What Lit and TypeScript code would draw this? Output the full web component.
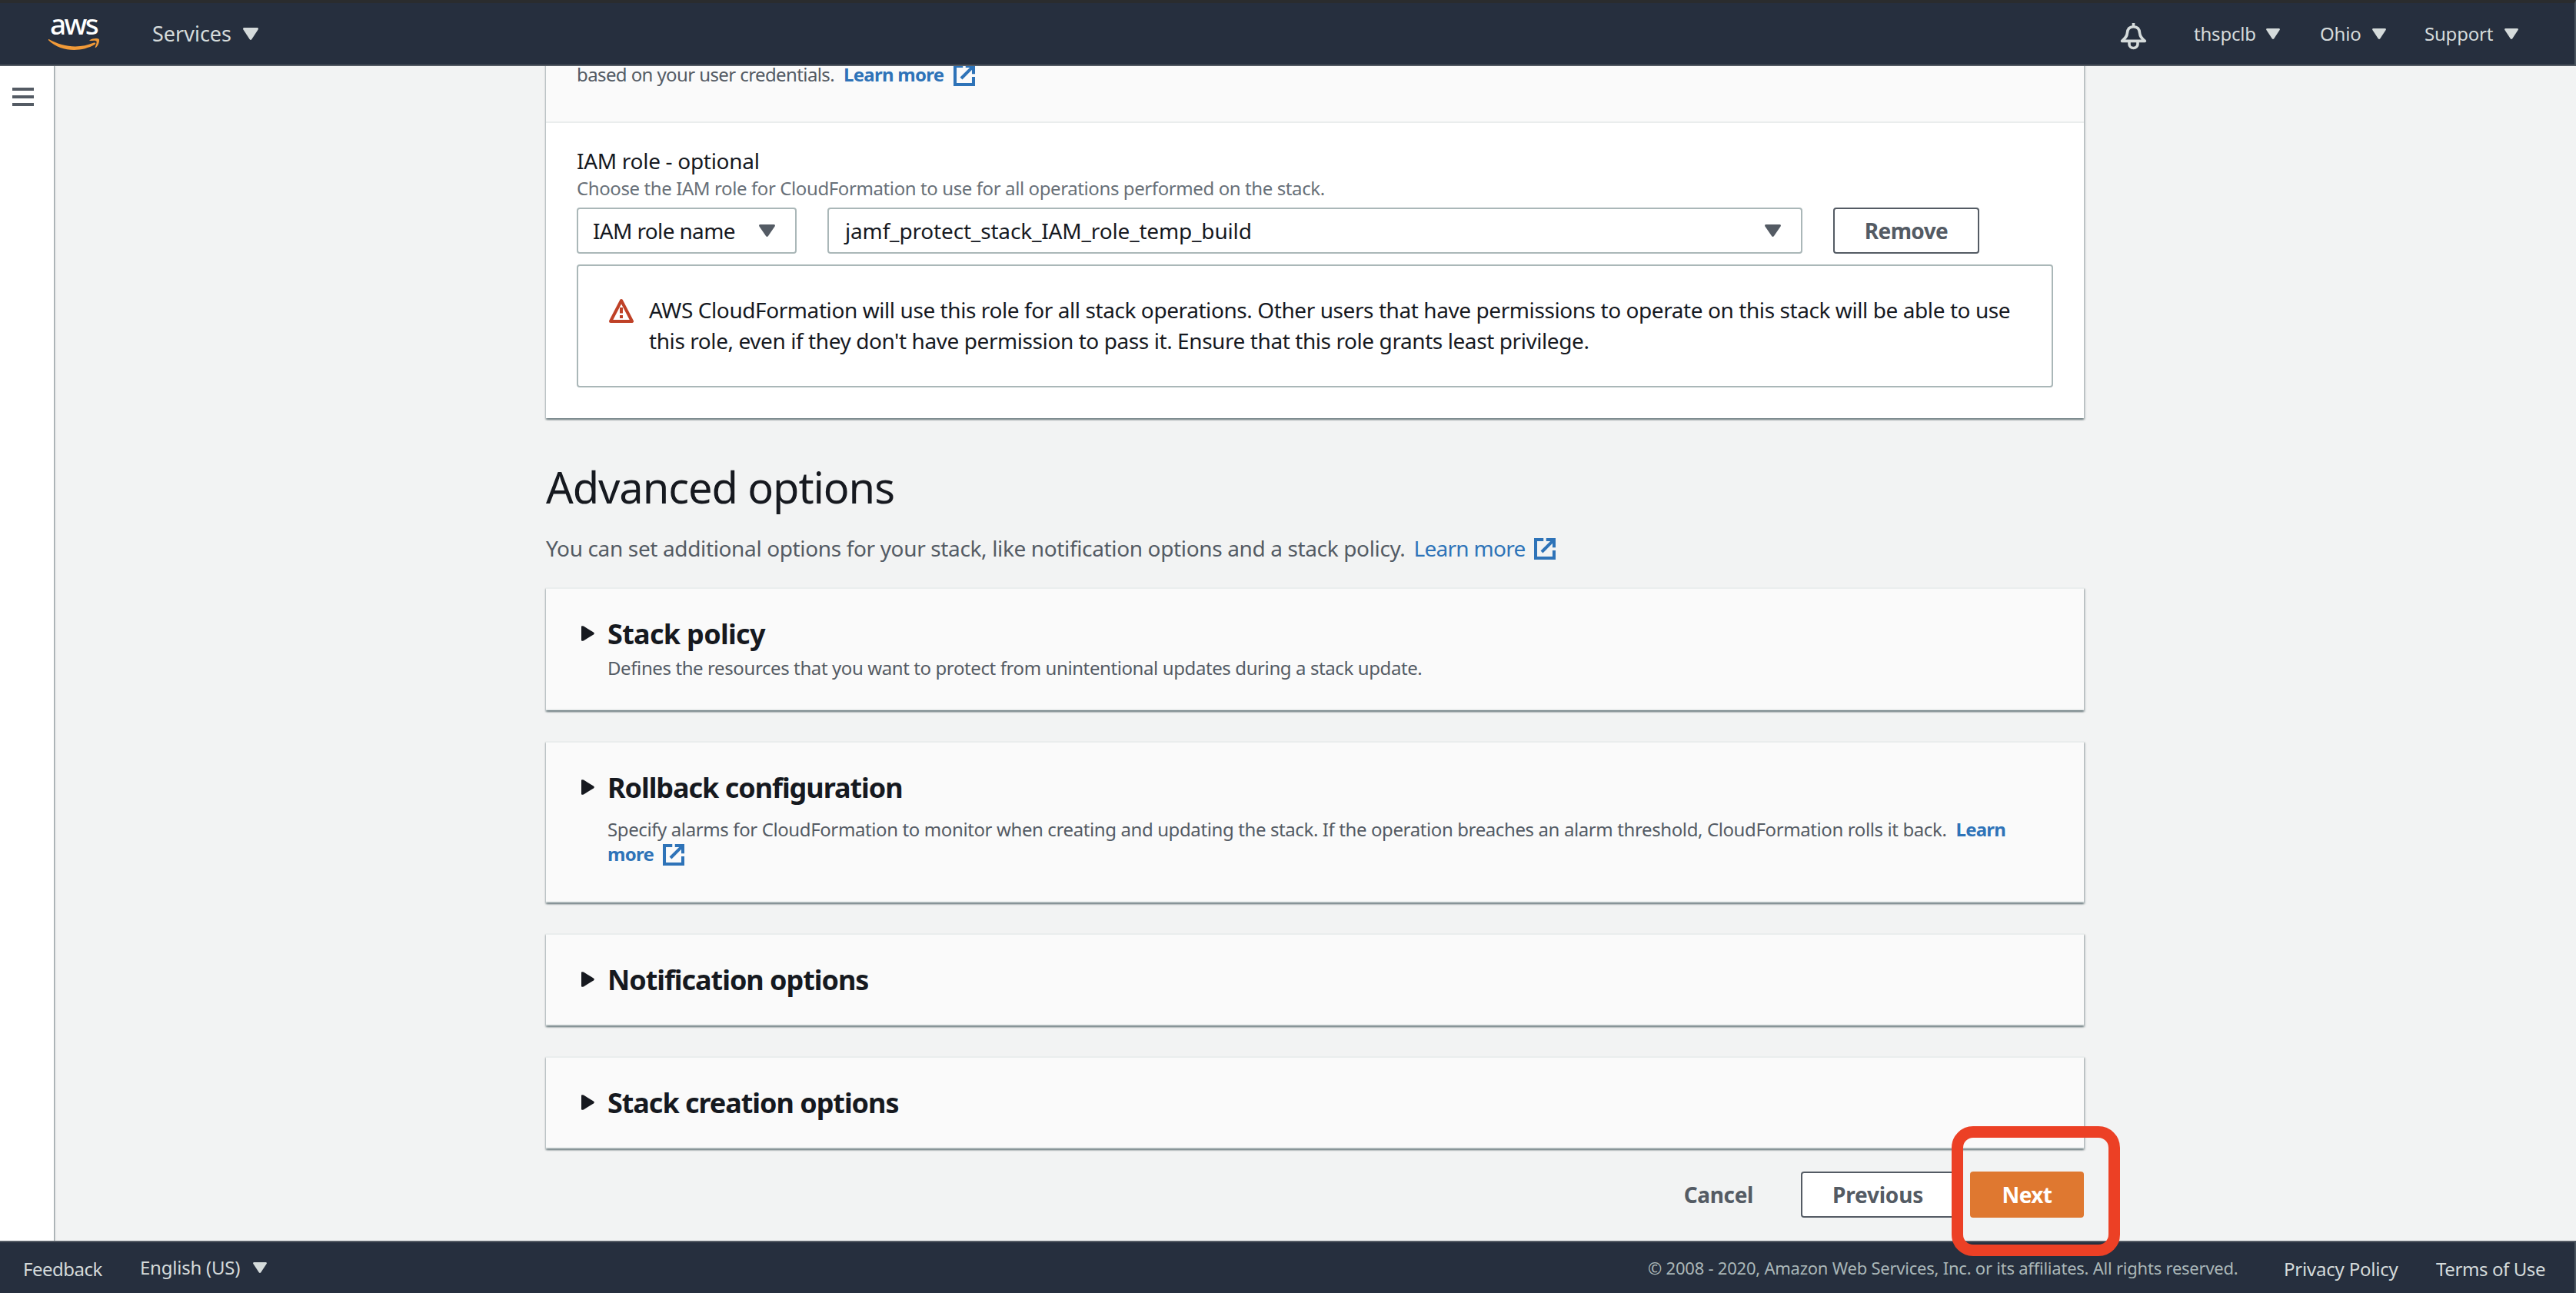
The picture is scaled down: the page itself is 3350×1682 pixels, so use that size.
import { LitElement, html, svg, css, nothing } from "lit";

const caret = (cls: string) => html`
  <svg class="caret ${cls}" viewBox="0 0 20 16" preserveAspectRatio="none">
    <path d="M1.2 0H18.8Q20.6 .6 19.6 2.4L11.4 15Q10 16.8 8.6 15L.4 2.4Q-.6 .6 1.2 0Z" />
  </svg>
`;

const external = (cls = "") => html`<svg class="external ${cls}" viewBox="0 0 16 16">
  <path d="M7 1.15H1.15V14.85H14.85V9.2" />
  <path d="M9 1.15H14.85V7" />
  <path d="M14.2 1.8L5.7 10.3" />
</svg>`;

interface Section {
  title: string;
  cls: string;
  body?: unknown;
}

const sections: Section[] = [
  {
    title: "Stack policy",
    cls: "policy",
    body: html`Defines the resources that you want to protect from unintentional updates during a stack update.`,
  },
  {
    title: "Rollback configuration",
    cls: "rollback",
    body: html`Specify alarms for CloudFormation to monitor when creating and updating the stack. If the operation
      breaches an alarm threshold, CloudFormation rolls it back.<a class="link strong lead">Learn<br />more</a>${external("low")}`,
  },
  { title: "Notification options", cls: "plain" },
  { title: "Stack creation options", cls: "plain" },
];

class AppRoot extends LitElement {
  static styles = css`
    :host {
      display: flex;
      flex-direction: column;
      box-sizing: border-box;
      width: 3350px;
      height: 1682px;
      overflow: hidden;
      background: #f2f3f3;
      color: #16191f;
      font-family: "Noto Sans", "Open Sans", sans-serif;
      font-size: 28px;
      font-weight: 400;
      line-height: 40px;
      letter-spacing: -0.42px;
    }
    * {
      box-sizing: border-box;
    }
    svg {
      display: block;
      flex: none;
    }
    .caret {
      fill: #d5dbdb;
      width: 18px;
      height: 14px;
    }
    .caret.big {
      width: 20px;
      height: 16px;
    }
    .caret.field {
      width: 21px;
      height: 16px;
      fill: #545b64;
    }
    .external {
      display: inline-block;
      width: 28px;
      height: 28px;
      fill: none;
      stroke: #2e73b8;
      stroke-width: 2.3;
      vertical-align: -6px;
      margin-left: 14px;
    }
    .external.near {
      margin-left: 11px;
      vertical-align: -4px;
    }
    .external.low {
      margin-left: 12px;
    }

    header {
      position: relative;
      z-index: 1;
      flex: none;
      display: flex;
      align-items: center;
      height: 86px;
      padding: 0 73px 0 60px;
      background: #262f3e;
      border-top: 4px solid #2a2c2e;
      border-right: 2px solid #4b555f;
      border-bottom: 2px solid #545b64;
      color: #d5dbdb;
      font-size: 24px;
      letter-spacing: -0.2px;
    }
    .logo {
      width: 72px;
      height: 68px;
      margin-top: -6px;
      overflow: visible;
    }
    .logo text {
      font-family: "Noto Sans", sans-serif;
      font-size: 37px;
      font-weight: 500;
      letter-spacing: -2.6px;
      fill: #fff;
    }
    .logo path {
      fill: #f19a38;
    }
    .menu {
      display: flex;
      align-items: center;
      justify-content: space-between;
      white-space: nowrap;
    }
    .services {
      width: 138px;
      margin-left: 66px;
      font-size: 27px;
      letter-spacing: 0;
    }
    .bell {
      width: 35px;
      height: 35px;
      margin-left: auto;
      margin-top: 7px;
      fill: none;
      stroke: #d5dbdb;
      stroke-width: 3.6;
      stroke-linejoin: round;
    }
    .account {
      width: 112px;
      margin-left: 61px;
    }
    .region {
      width: 86px;
      margin-left: 52px;
    }
    .support {
      width: 122px;
      margin-left: 50px;
    }

    .main {
      flex: 1;
      min-height: 0;
      display: flex;
    }
    .rail {
      flex: none;
      width: 70px;
      padding: 28px 16px;
      background: #fff;
      box-shadow: 1px 0 1px rgba(0, 28, 36, 0.3), 2px 0 2px rgba(0, 28, 36, 0.12);
    }
    .bars {
      display: flex;
      flex-direction: column;
      gap: 6px;
      width: 28px;
    }
    .bars i {
      height: 4px;
      background: #545b64;
    }
    .page {
      flex: none;
      width: 2000px;
      margin: 0 auto;
      white-space: nowrap;
    }

    .card {
      background: #fafafa;
      box-shadow: 0 2px 2px rgba(0, 28, 36, 0.38), 2px 2px 2px rgba(0, 28, 36, 0.16),
        -1px 2px 2px rgba(0, 28, 36, 0.16);
    }
    .permissions {
      height: 464px;
      margin-top: -6px;
      background: #fff;
    }
    .intro {
      height: 80px;
      padding: 1px 40px 0;
      background: #fafafa;
      border-bottom: 2px solid #eaeded;
      color: #545b64;
      font-size: 24px;
      line-height: 32px;
      letter-spacing: -0.6px;
    }
    .link {
      color: #2e73b8;
    }
    .strong {
      font-weight: 700;
      letter-spacing: -0.75px;
    }
    .lead {
      margin-left: 12px;
    }
    .intro .external {
      margin-left: 13px;
    }
    .fields {
      padding: 31px 40px 0;
    }
    .label {
      line-height: 36px;
      letter-spacing: -0.3px;
    }
    .hint {
      margin: 2px 0 9px;
      color: #687078;
      font-size: 24px;
      line-height: 32px;
      letter-spacing: -0.4px;
    }
    .row {
      display: flex;
    }
    .select {
      display: flex;
      align-items: center;
      justify-content: space-between;
      height: 60px;
      border: 2px solid #aab7b8;
      border-radius: 4px;
      padding: 0 26px 0 21px;
      background: #fff;
    }
    .kind {
      width: 286px;
      padding-left: 19px;
      letter-spacing: -0.65px;
    }
    .role {
      width: 1268px;
      margin: 0 40px;
      letter-spacing: -0.16px;
    }
    .button {
      display: flex;
      align-items: center;
      justify-content: center;
      height: 60px;
      border: 2px solid #545b64;
      border-radius: 4px;
      background: #fff;
      color: #545b64;
      font-weight: 700;
      letter-spacing: -0.2px;
    }
    .remove {
      width: 190px;
      letter-spacing: -0.6px;
    }
    .alert {
      display: flex;
      height: 160px;
      margin-top: 14px;
      padding: 37px 39px 0 40px;
      border: 2px solid #aab7b8;
      border-radius: 4px;
    }
    .warning {
      width: 32px;
      height: 32px;
      margin: 5px 20px 0 0;
      fill: none;
      stroke: #bf4127;
      stroke-width: 4;
      stroke-linejoin: round;
    }

    h1 {
      margin: 55px 0 26px;
      font-size: 56px;
      font-weight: 400;
      line-height: 68px;
      letter-spacing: -1.1px;
    }
    .summary {
      margin-bottom: 31px;
      color: #545b64;
      letter-spacing: -0.36px;
    }
    .summary .link {
      margin-left: 11px;
      letter-spacing: -0.7px;
    }

    .section {
      display: flex;
      height: 120px;
      margin-bottom: 40px;
      padding: 37px 44px;
      border-top: 2px solid #eaeded;
      border-bottom: 2px solid #eaeded;
    }
    .section.policy {
      height: 160px;
    }
    .section.rollback {
      height: 210px;
    }
    .arrow {
      width: 17px;
      height: 20px;
      margin: 11px 17px 0 2px;
      fill: #16191f;
    }
    h2 {
      margin: 0;
      font-size: 36px;
      font-weight: 700;
      line-height: 44px;
      letter-spacing: -1.05px;
    }
    .policy h2 {
      letter-spacing: -0.7px;
    }
    .desc {
      margin-top: 6px;
      color: #545b64;
      font-size: 24px;
      line-height: 32px;
      letter-spacing: -0.4px;
    }
    .rollback .desc {
      margin-top: 16px;
      letter-spacing: -0.39px;
    }

    .actions {
      display: flex;
      justify-content: flex-end;
      margin-top: -10px;
    }
    .cancel {
      border: 0;
      background: none;
      margin-right: 62px;
      letter-spacing: -0.35px;
    }
    .previous {
      width: 200px;
      margin-right: 20px;
    }
    .target {
      position: relative;
    }
    .next {
      width: 148px;
      border: 0;
      background: #df7830;
      color: #fff;
      letter-spacing: -0.6px;
    }
    .frame {
      position: absolute;
      left: -24px;
      top: -59px;
      width: 219px;
      height: 169px;
      border: 15px solid #ec4025;
      border-radius: 28px;
    }

    footer {
      flex: none;
      display: flex;
      height: 68px;
      padding: 0 38px 0 30px;
      background: #262f3e;
      border-top: 2px solid #545b64;
      border-right: 2px solid #4b555f;
      color: #d5dbdb;
      font-size: 24px;
      line-height: 64px;
      white-space: nowrap;
      letter-spacing: -0.23px;
    }
    .feedback {
      width: 152px;
      padding-top: 3px;
      letter-spacing: -0.5px;
    }
    .language {
      width: 165px;
    }
    .copyright {
      width: 827px;
      margin-left: auto;
      padding-top: 1px;
      color: #aab7b8;
      font-size: 22px;
    }
    .privacy {
      width: 198px;
      padding-top: 3px;
      letter-spacing: -0.2px;
    }
    .terms {
      width: 142px;
      padding-top: 3px;
      letter-spacing: -0.4px;
    }
  `;

  private header() {
    return html`
      <header>
        <svg class="logo" viewBox="60 6 72 68">
          ${svg`<text x="65" y="44">aws</text>`}
          <path
            d="M63.6 50C82 60.5 103 62.5 122.3 54.6C124 54 125 55.5 123.5 56.7C105 67.5 79 66.5 63.2 51.4C62.6 50.4 62.9 49.8 63.6 50Z"
          />
          <path
            d="M116.6 51.2C120 48.6 127.2 48.2 128.7 50C130 52.2 127.6 58.8 124.6 61C123.8 61.3 123.5 60.6 123.9 59.8C125 57.2 126.3 53.6 125.3 52.4C124 51.2 120.2 51.8 117.2 52.1C116.3 52.1 116.2 51.6 116.6 51.2Z"
          />
        </svg>
        <div class="menu services"><span>Services</span>${caret("big")}</div>
        <svg class="bell" viewBox="0 0 35 35">
          <path d="M17.5 0V5" />
          <path d="M2.6 23.4C7 19.5 9 17.5 9.3 13.5C9.6 8 12.5 4.8 17.5 4.8C22.5 4.8 25.4 8 25.7 13.5C26 17.5 28 19.5 32.4 23.4Z" />
          <path d="M12 24.5V27.5A5.5 5 0 0 0 23 27.5V24.5" />
        </svg>
        <div class="menu account"><span>thspclb</span>${caret("")}</div>
        <div class="menu region"><span>Ohio</span>${caret("")}</div>
        <div class="menu support"><span>Support</span>${caret("")}</div>
      </header>
    `;
  }

  private permissions() {
    return html`
      <section class="card permissions">
        <div class="intro">
          based on your user credentials.<a class="link strong lead">Learn more</a>${external()}
        </div>
        <div class="fields">
          <div class="label">IAM role - optional</div>
          <div class="hint">
            Choose the IAM role for CloudFormation to use for all operations performed on the stack.
          </div>
          <div class="row">
            <div class="select kind"><span>IAM role name</span>${caret("field")}</div>
            <div class="select role"><span>jamf_protect_stack_IAM_role_temp_build</span>${caret("field")}</div>
            <div class="button remove">Remove</div>
          </div>
          <div class="alert">
            <svg class="warning" viewBox="0 0 32 32">
              <path d="M16 3L30 30H2Z" />
              <path d="M16 12V19.5M16 22V26" />
            </svg>
            <div>
              AWS CloudFormation will use this role for all stack operations. Other users that have permissions to
              operate on this stack will be able to use<br />this role, even if they don't have permission to pass it.
              Ensure that this role grants least privilege.
            </div>
          </div>
        </div>
      </section>
    `;
  }

  private section(s: Section) {
    return html`
      <section class="card section ${s.cls}">
        <svg class="arrow" viewBox="0 0 17 20">
          <path d="M0 1Q0 -.4 3 .6L15.8 8.4Q17.8 10 15.8 11.6L3 19.4Q0 20.4 0 19Z" />
        </svg>
        <div>
          <h2>${s.title}</h2>
          ${s.body ? html`<div class="desc">${s.body}</div>` : nothing}
        </div>
      </section>
    `;
  }

  render() {
    return html`
      ${this.header()}
      <div class="main">
        <nav class="rail"><div class="bars"><i></i><i></i><i></i></div></nav>
        <div class="page">
          ${this.permissions()}
          <h1>Advanced options</h1>
          <div class="summary">
            You can set additional options for your stack, like notification options and a stack policy.<a class="link"
              >Learn more</a
            >${external("near")}
          </div>
          ${sections.map((s) => this.section(s))}
          <div class="actions">
            <div class="button cancel">Cancel</div>
            <div class="button previous">Previous</div>
            <div class="target">
              <div class="button next">Next</div>
              <div class="frame"></div>
            </div>
          </div>
        </div>
      </div>
      <footer>
        <span class="feedback">Feedback</span>
        <div class="menu language"><span>English (US)</span>${caret("")}</div>
        <span class="copyright">© 2008 - 2020, Amazon Web Services, Inc. or its affiliates. All rights reserved.</span>
        <span class="privacy">Privacy Policy</span>
        <span class="terms">Terms of Use</span>
      </footer>
    `;
  }
}

customElements.define("app-root", AppRoot);
